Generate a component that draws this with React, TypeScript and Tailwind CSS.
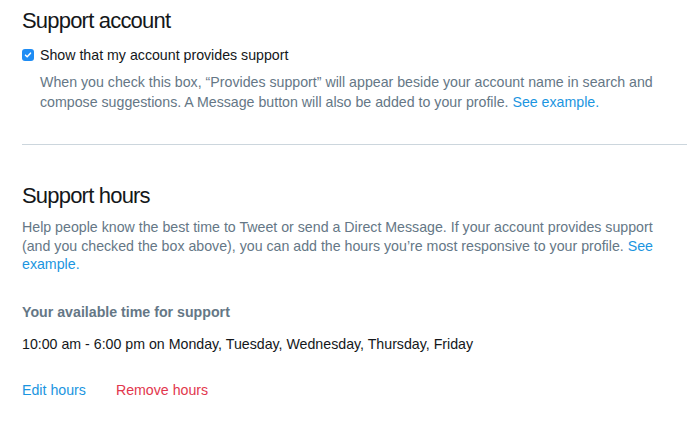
export default function App() {
  return (
    <div className="min-h-screen bg-white pl-[22px] pr-[8px] text-[14.2px] text-[#14171a] font-['Liberation_Sans',Arial,sans-serif]">
      <section className="pt-[7px] pb-[32px]">
        <h2 className="text-[22px] leading-[28px] tracking-[-0.8px] font-light">Support account</h2>
        <label className="mt-[10px] flex items-center gap-[6px] leading-[20px]">
          <span className="flex h-[12px] w-[12px] items-center justify-center rounded-[3px] bg-[#1e8cf4]">
            <svg viewBox="0 0 12 12" className="h-[10px] w-[10px]" fill="none">
              <path d="M3 6.2 5 8.2 9 3.8" stroke="white" strokeWidth="1.8" strokeLinecap="round" strokeLinejoin="round" />
            </svg>
          </span>
          <span>Show that my account provides support</span>
        </label>
        <p className="mt-[7px] max-w-[640px] pl-[18px] leading-[20px] text-[#657786]">
          When you check this box, “Provides support” will appear beside your account name in search and compose
          suggestions. A Message button will also be added to your profile.{" "}
          <a href="#" className="text-[#1b95e0]">See example.</a>
        </p>
      </section>

      <div className="h-px bg-[#ccd6dd]" />

      <section className="pt-[37px]">
        <h2 className="text-[22px] leading-[28px] tracking-[-0.8px] font-light">Support hours</h2>
        <p className="mt-[8px] max-w-[638px] leading-[18.5px] text-[#657786]">
          Help people know the best time to Tweet or send a Direct Message. If your account provides support (and you
          checked the box above), you can add the hours you’re most responsive to your profile.{" "}
          <a href="#" className="text-[#1b95e0]">See example.</a>
        </p>
        <h3 className="mt-[28px] font-bold leading-[20px] text-[#657786]">Your available time for support</h3>
        <p className="mt-[12px] leading-[20px]">10:00 am - 6:00 pm on Monday, Tuesday, Wednesday, Thursday, Friday</p>
        <div className="mt-[26px] flex gap-[30px] leading-[20px]">
          <a href="#" className="text-[#1b95e0]">Edit hours</a>
          <a href="#" className="text-[#e2374d]">Remove hours</a>
        </div>
      </section>
    </div>
  );
}
